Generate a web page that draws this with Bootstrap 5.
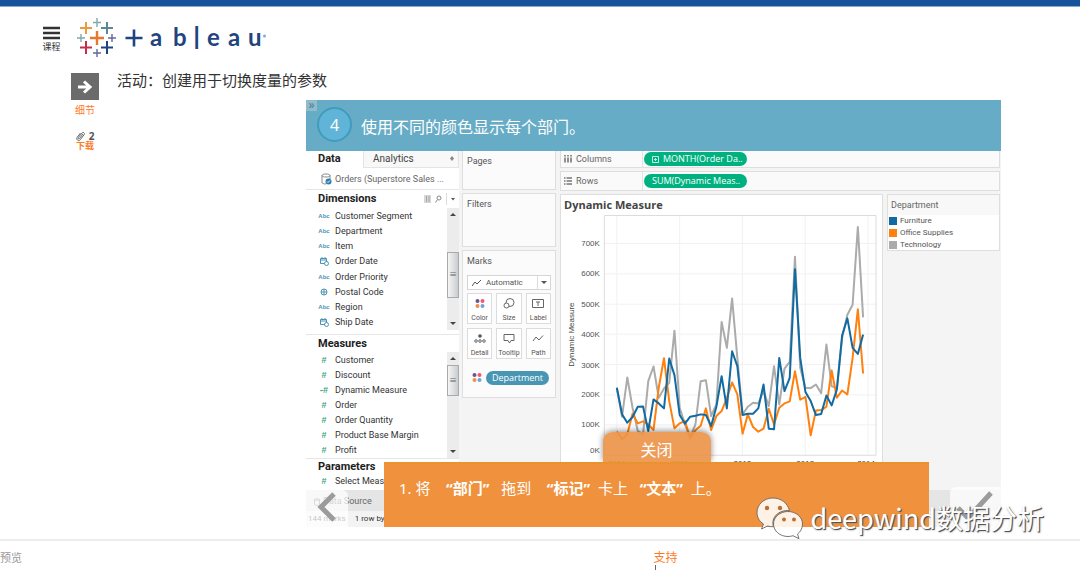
<!DOCTYPE html>
<html lang="zh-CN">
<head>
<meta charset="utf-8">
<meta name="viewport" content="width=device-width, initial-scale=1">
<title>创建用于切换度量的参数</title>
<link href="https://cdn.jsdelivr.net/npm/bootstrap@5.3.0/dist/css/bootstrap.min.css" rel="stylesheet">
<style>
  :root { --cjk: "Noto Sans", "Noto Sans CJK SC", sans-serif; --ui: Roboto, "Noto Sans CJK SC", sans-serif; }
  body { font-family: var(--cjk); color: #333; background: #fff; position: relative; overflow-x: hidden; }
  svg { display: block; }
  button { border: 0; background: none; padding: 0; font: inherit; color: inherit; }
  .topbar { height: 7px; background: #17539a; border-bottom: 1px solid #8aa9cd; }
  .site-head { padding: 11px 0 0 42px; gap: 16px; }
  .menu-btn { font-size: 9px; line-height: 12px; width: 19px; margin-top: 8px; color: #333; }
  .lesson { padding: 15px 79px 0 71px; gap: 18px; }
  .side { width: 28px; color: #ff7a1f; font-size: 10px; line-height: 12px; }
  .side a { color: #ff7a1f; text-decoration: none; }
  .go-box { width: 28px; height: 27px; background: #6b6b6b; }
  .files { font-size: 10px; color: #555; height: 10px; margin-top: 15px; }
  .files-link { font-size: 9px; line-height: 9px; font-weight: 700; }
  .lesson-title { font-size: 15px; line-height: 14px; font-weight: 400; margin: 0 0 13px; font-family: "Noto Sans CJK SC", sans-serif; }
  .stage { margin-left: 189px; }
  .banner { height: 51px; background: #67acc6; color: #fff; font-size: 16px; padding: 0 0 2px 11px; gap: 9px; }
  .step-no { width: 35px; height: 35px; border: 2px solid #419bbd; background: #5fb4d7; border-radius: 50%; }
  .corner { left: 0; top: 0; width: 11px; height: 11px; background: #8fbccb; color: #55798a; font-size: 12px; line-height: 9px; text-align: center; }
  .app { font-family: var(--ui); font-size: 9px; line-height: 12px; color: #444; background: #f4f4f4; height: 339px; }
  .pane { width: 153px; background: #fff; }
  .tab-row { height: 17px; font-size: 10px; line-height: 15px; }
  .tab-data { width: 57px; padding-left: 12px; color: #222; font-size: 11px; font-weight: 700; }
  .tab-an { background: #f8f8f8; border: 1px solid #e4e4e4; border-top: 0; padding: 0 4px 0 9px; }
  .source { height: 22px; border-bottom: 1px solid #e6e6e6; padding-left: 15px; gap: 3px; color: #666; }
  .pane h2 { font-size: 11px; font-weight: 700; color: #1d1d1d; margin: 0; padding: 0 3px 0 12px; line-height: 18px; height: 18px; }
  .pane h2.short { height: 17px; line-height: 15px; }
  .fields { height: 122px; margin: 0; color: #333; }
  .fields-m { height: 106px; }
  .fields li { padding-left: 12px; gap: 5px; min-height: 0; }
  .kind { width: 12px; flex: none; color: #4b93b3; font: 700 6px/8px "Liberation Sans", sans-serif; text-align: center; }
  .kind svg { margin: auto; }
  .hash { color: #3fa583; font-size: 9px; }
  .scroller { width: 12px; background: #ececec; padding: 4px 0; }
  .thumb { background: linear-gradient(90deg, #f5f5f5, #c9ccd0); border: 1px solid #aaa; height: 46px; color: #666; font-size: 8px; }
  .thumb-low { margin-top: 36px; }
  .thumb-m { height: 31px; margin-top: 5px; }
  .rule-top { border-top: 1px solid #e6e6e6; }
  .shelves { width: 94px; margin: 0 4px 0 3px; gap: 3px; }
  .shelf { background: #fbfbfb; border: 1px solid #dedede; padding: 4px; color: #555; }
  .shelf-pages { height: 39px; }
  .shelf-filters { height: 54px; }
  .shelf-marks { height: 148px; }
  .mark-type { height: 15px; border: 1px solid #d5d5d5; background: #fff; font-size: 8px; line-height: 12px; color: #555; padding: 0; margin: 8px 0 3px; }
  .mark-grid { display: grid; grid-template-columns: repeat(3, 1fr); gap: 4px; }
  .mark-btn { height: 31px; border: 1px solid #dcdcdc; background: #fff; font-size: 7px; line-height: 10px; padding-top: 4px; }
  .pill { border-radius: 8px; color: #fff; font: 9px/14px "Open Sans", sans-serif; height: 14px; white-space: nowrap; overflow: hidden; }
  .pill-dep { background: #4896b3; width: 63px; text-align: center; }
  .pill-green { background: #00b180; width: 103px; padding-left: 8px; }
  .board { gap: 3px; }
  .axis-shelf { background: #fafafa; border: 1px solid #dedede; height: 20px; margin-right: 1px; }
  .axis-shelf.first { height: 17px; border-top: 0; }
  .axis-label { width: 82px; padding-left: 3px; border-right: 1px solid #e4e4e4; gap: 4px; color: #666; margin-right: 1px; }
  .viz { background: #fff; border: 1px solid #dedede; }
  .viz h1 { font: 700 11px/14px "Open Sans", sans-serif; color: #444; margin: 3px 0 2px 3px; }
  .key { width: 113px; border: 1px solid #dedede; background: #fff; height: 57px; margin-right: 1px; }
  .key-head { background: #f8f8f8; height: 20px; line-height: 20px; padding-left: 3px; color: #666; }
  .key ul { font-size: 8px; line-height: 12px; color: #555; padding-left: 1px; }
  .key li { gap: 3px; }
  .swatch { width: 8px; height: 8px; }
  .source-bar { height: 21px; background: #e5e5e5; padding: 3px 0 0 8px; font-family: var(--ui); font-size: 9px; color: #666; gap: 3px; }
  .status-bar { height: 16px; background: #f3f3f3; font-family: var(--ui); font-size: 8px; color: #333; padding: 0 0 0 2px; gap: 9px; }
  .instruction { left: 78px; right: 72px; bottom: 0; }
  .close-tab { width: 108px; height: 30px; border-radius: 9px 9px 0 0; background: rgba(236,146,71,.9); color: #fff; font-size: 16px; line-height: 36px; box-shadow: 0 -1px 6px rgba(0,0,0,.45); }
  .instruction-text { height: 65px; background: #f0923d; border-top: 2px solid #ea922d; color: #fff; font: 15px/20px var(--cjk); padding: 14px 15px; position: relative; margin: 0; white-space: pre; }
  .nav-box { bottom: 0; background: rgba(255,255,255,.72); }
  .nav-prev { left: 0; width: 42px; height: 37px; border-radius: 0 6px 0 0; }
  .nav-next { right: 0; width: 51px; height: 40px; border-radius: 6px 0 0 0; }
  .site-foot { margin-top: 12px; border-top: 2px solid #ededed; height: 31px; padding-top: 8px; display: grid; grid-template-columns: 60.5% auto; font: 11px/16px "Noto Sans CJK SC", sans-serif; color: #999; overflow: hidden; }
  .site-foot a { color: #ff7a1f; text-decoration: none; font-size: 12px; }
  .caret-mark { width: 1px; height: 5px; background: #666; margin-left: 2px; }
  .watermark { right: 36px; bottom: 31px; gap: 7px; font: 27px/40px "Noto Sans CJK SC", sans-serif; color: #fff; text-shadow: 1px 1px 0 #555, 1px 1px 2px #777; pointer-events: none; }
</style>
</head>
<body>
<div class="topbar"></div>
<header class="site-head d-flex align-items-start">
  <button type="button" class="menu-btn">
    <svg width="17" height="15" viewBox="0 0 17 15" class="mx-auto"><path d="M0 2h17M0 7h17M0 12h17" stroke="#333" stroke-width="2.600"/></svg>
    <span class="d-block text-nowrap">课程</span>
  </button>
  <svg width="190" height="40" viewBox="77 18 190 40" role="img" aria-label="tableau">
    <g fill="none">
      <path d="M90 38h14M97 31v14" stroke="#e8762c" stroke-width="2.4"/>
      <path d="M80 28h12M86 22v12" stroke="#eb9a3c" stroke-width="2"/>
      <path d="M101 28h12M107 22v12" stroke="#5b879b" stroke-width="2"/>
      <path d="M80 47.500h12M86 41v13" stroke="#c72c4a" stroke-width="2"/>
      <path d="M101 47.500h12M107 41v13" stroke="#1f447e" stroke-width="2"/>
      <path d="M93 22.500h8M97 18v9M77 38h8M81 34v8" stroke="#7fa8b0" stroke-width="1.400"/>
      <path d="M108 38h8M112 34v8M93 53h8M97 49v8" stroke="#62699a" stroke-width="1.400"/>
      <path d="M125.500 38h17M134 29.500v17" stroke="#1f447e" stroke-width="2.600"/>
    </g>
    <g fill="#1f447e" font-family="Lato, sans-serif" font-size="24" font-weight="700">
      <text x="150 173" y="46">ab</text><text x="193" y="49" font-size="31" font-weight="400">l</text><text x="207 228 248" y="46">eau</text>
    </g>
    <circle cx="264.500" cy="36" r="1.500" fill="#8ba6c6"/>
  </svg>
</header>

<main class="lesson d-flex align-items-start">
  <nav class="side flex-shrink-0 text-center">
    <a href="#" class="d-block text-nowrap">
      <span class="go-box d-flex align-items-center justify-content-center mb-1"><svg width="16" height="16" viewBox="0 0 16 16"><path d="M1 8h12M7 2.500 13 8l-6 5.500" fill="none" stroke="#fff" stroke-width="3"/></svg></span>
      <span class="d-block">细节</span>
    </a>
    <div class="files d-flex align-items-center justify-content-center gap-1"><svg width="9" height="11" viewBox="0 0 9 11"><path d="M7 3 3.500 7.500c-.8 1-2-.1-1.200-1L6 2c1.300-1.500 3.300.1 2.100 1.700L4.300 8.700C2.600 10.800-.4 8.500 1.200 6.300L4.500 2" fill="none" stroke="#666"/></svg><b>2</b></div>
    <a href="#" class="files-link d-block text-nowrap">下载</a>
  </nav>
  <div class="flex-fill">
    <p class="lesson-title">活动：创建用于切换度量的参数</p>
    <section class="stage position-relative">
      <div class="banner d-flex align-items-center position-relative">
        <span class="corner position-absolute">»</span>
        <span class="step-no d-flex align-items-center justify-content-center">4</span>
        <span class="pt-1">使用不同的颜色显示每个部门。</span>
      </div>

      <div class="app d-flex">
        <div class="pane flex-shrink-0">
          <div class="tab-row d-flex"><span class="tab-data">Data</span><span class="tab-an flex-fill d-flex justify-content-between"><span>Analytics</span><svg width="4" height="12" viewBox="0 0 4 12"><path d="M2 5 4 7.500 2 10 0 7.500z" fill="#888"/></svg></span></div>
          <div class="source d-flex align-items-center"><svg width="11" height="12" viewBox="0 0 11 12"><path d="M1 2.500v7c0 1 2 1.500 4 1.500M9 2.500V6M1 2.500C1 .5 9 .5 9 2.500S1 4.500 1 2.500" fill="none" stroke="#888"/><circle cx="7.500" cy="8.500" r="3" fill="#287fae"/><path d="m6 8.500 1 1 2-2" fill="none" stroke="#fff"/></svg><span>Orders (Superstore Sales ...</span></div>
          <h2 class="d-flex align-items-center">Dimensions
            <svg class="ms-auto" width="32" height="12" viewBox="0 0 32 12"><path d="M0 3h7M0 5h7M0 7h7M0 9h7M2.500 3v6M5 3v6" stroke="#999" stroke-width=".8"/><circle cx="15" cy="5" r="2" fill="none" stroke="#888"/><path d="m13.500 6.500-2 3" stroke="#888"/><path d="M22.500 0v12" stroke="#ddd"/><path d="M27 5h4l-2 2.500z" fill="#555"/></svg>
          </h2>
          <div class="d-flex">
            <ul class="fields list-unstyled d-flex flex-column flex-fill">
              <li class="d-flex flex-fill align-items-center"><span class="kind">Abc</span>Customer Segment</li>
              <li class="d-flex flex-fill align-items-center"><span class="kind">Abc</span>Department</li>
              <li class="d-flex flex-fill align-items-center"><span class="kind">Abc</span>Item</li>
              <li class="d-flex flex-fill align-items-center"><span class="kind"><svg width="9" height="9" viewBox="0 0 9 9"><path d="M.5 1.500h6v5h-6zM.5 3h6M2 0v2M5 0v2" fill="none" stroke="#4b93b3"/><circle cx="6.500" cy="6.500" r="2" fill="#fff" stroke="#4b93b3"/></svg></span>Order Date</li>
              <li class="d-flex flex-fill align-items-center"><span class="kind">Abc</span>Order Priority</li>
              <li class="d-flex flex-fill align-items-center"><span class="kind"><svg width="8" height="8" viewBox="0 0 8 8"><circle cx="4" cy="4" r="3" fill="none" stroke="#4b93b3"/><path d="M4 1v6M1 4h6" stroke="#4b93b3"/></svg></span>Postal Code</li>
              <li class="d-flex flex-fill align-items-center"><span class="kind">Abc</span>Region</li>
              <li class="d-flex flex-fill align-items-center"><span class="kind"><svg width="9" height="9" viewBox="0 0 9 9"><path d="M.5 1.500h6v5h-6zM.5 3h6M2 0v2M5 0v2" fill="none" stroke="#4b93b3"/><circle cx="6.500" cy="6.500" r="2" fill="#fff" stroke="#4b93b3"/></svg></span>Ship Date</li>
            </ul>
            <div class="scroller d-flex flex-column">
              <svg class="mx-auto" width="6" height="4" viewBox="0 0 6 4"><path d="M0 4h6L3 1z" fill="#444"/></svg>
              <div class="thumb thumb-low d-flex align-items-center justify-content-center">≡</div>
              <svg class="mx-auto mt-auto" width="6" height="4" viewBox="0 0 6 4"><path d="M0 0h6L3 3z" fill="#444"/></svg>
            </div>
          </div>
          <h2 class="rule-top mt-1">Measures</h2>
          <div class="d-flex">
            <ul class="fields fields-m list-unstyled d-flex flex-column flex-fill">
              <li class="d-flex flex-fill align-items-center"><span class="kind hash">#</span>Customer</li>
              <li class="d-flex flex-fill align-items-center"><span class="kind hash">#</span>Discount</li>
              <li class="d-flex flex-fill align-items-center"><span class="kind hash text-nowrap">⁃#</span>Dynamic Measure</li>
              <li class="d-flex flex-fill align-items-center"><span class="kind hash">#</span>Order</li>
              <li class="d-flex flex-fill align-items-center"><span class="kind hash">#</span>Order Quantity</li>
              <li class="d-flex flex-fill align-items-center"><span class="kind hash">#</span>Product Base Margin</li>
              <li class="d-flex flex-fill align-items-center"><span class="kind hash">#</span>Profit</li>
            </ul>
            <div class="scroller d-flex flex-column">
              <svg class="mx-auto" width="6" height="4" viewBox="0 0 6 4"><path d="M0 4h6L3 1z" fill="#444"/></svg>
              <div class="thumb thumb-m d-flex align-items-center justify-content-center">≡</div>
              <svg class="mx-auto mt-auto" width="6" height="4" viewBox="0 0 6 4"><path d="M0 0h6L3 3z" fill="#444"/></svg>
            </div>
          </div>
          <h2 class="rule-top short">Parameters</h2>
          <ul class="list-unstyled fields h-auto"><li class="d-flex align-items-center"><span class="kind hash">#</span>Select Measure</li></ul>
        </div>

        <div class="shelves d-flex flex-column flex-shrink-0">
          <div class="shelf shelf-pages border-top-0">Pages</div>
          <div class="shelf shelf-filters">Filters</div>
          <div class="shelf shelf-marks">
            <span class="d-block">Marks</span>
            <button type="button" class="mark-type w-100 d-flex align-items-center">
              <svg class="ms-1 me-1" width="10" height="8" viewBox="0 0 10 8"><path d="m0 7 3-4 2 2 4-4" fill="none" stroke="#555"/></svg>Automatic
              <svg class="ms-auto" width="13" height="13" viewBox="0 0 13 13"><path d="M.5 0v13" stroke="#ddd"/><path d="M4 5h6L7 8z" fill="#555"/></svg>
            </button>
            <div class="mark-grid">
              <button type="button" class="mark-btn"><svg class="mx-auto mb-1" width="12" height="11" viewBox="0 0 12 11"><circle cx="3.500" cy="3" r="2" fill="#6b5686"/><circle cx="8.500" cy="3" r="2" fill="#f2596b"/><circle cx="3.500" cy="8" r="2" fill="#f28e4b"/><circle cx="8.500" cy="8" r="2" fill="#6ea5d8"/></svg>Color</button>
              <button type="button" class="mark-btn"><svg class="mx-auto mb-1" width="12" height="11" viewBox="0 0 12 11"><circle cx="7" cy="4.500" r="4" fill="none" stroke="#666"/><circle cx="3.500" cy="7.500" r="2.500" fill="#fff" stroke="#666"/></svg>Size</button>
              <button type="button" class="mark-btn"><svg class="mx-auto mb-1" width="12" height="11" viewBox="0 0 12 11"><path d="M.5 1.500h11v8H.5zM4 4h4M6 4v4" fill="none" stroke="#666"/></svg>Label</button>
              <button type="button" class="mark-btn"><svg class="mx-auto mb-1" width="12" height="11" viewBox="0 0 12 11"><circle cx="6" cy="3" r="1.800" fill="#555"/><g fill="none" stroke="#666"><circle cx="2" cy="8" r="1.300"/><circle cx="6" cy="8" r="1.300"/><circle cx="10" cy="8" r="1.300"/></g></svg>Detail</button>
              <button type="button" class="mark-btn"><svg class="mx-auto mb-1" width="12" height="11" viewBox="0 0 12 11"><path d="M1 1.500h10v6H8L6.500 10 5 7.500H1z" fill="none" stroke="#666"/></svg>Tooltip</button>
              <button type="button" class="mark-btn"><svg class="mx-auto mb-1" width="12" height="11" viewBox="0 0 12 11"><path d="m1 8 3-4 3 3 4-4.500" fill="none" stroke="#666"/></svg>Path</button>
            </div>
            <div class="d-flex align-items-center pt-2 mt-1">
              <svg class="ms-1" width="15" height="12" viewBox="0 0 15 12"><circle cx="3.500" cy="3" r="2" fill="#6b5686"/><circle cx="8.500" cy="3" r="2" fill="#f2596b"/><circle cx="3.500" cy="8" r="2" fill="#f28e4b"/><circle cx="8.500" cy="8" r="2" fill="#6ea5d8"/></svg>
              <span class="pill pill-dep flex-shrink-0">Department</span>
            </div>
          </div>
        </div>

        <div class="board flex-fill d-flex flex-column">
          <div class="axis-shelf first d-flex align-items-center"><span class="axis-label d-flex align-items-center h-100"><svg width="8" height="8" viewBox="0 0 8 8"><path d="M1 0v1.500M4 0v1.500M7 0v1.500M1 2.500v5M4 2.500v5M7 2.500v5" stroke="#777" stroke-width="1.600"/></svg>Columns</span><span class="pill pill-green"><svg class="d-inline-block me-1" width="7" height="7" viewBox="0 0 7 7"><path d="M.5.5h6v6h-6zM2 3.500h3M3.500 2v3" fill="none" stroke="#c7f0e3"/></svg>MONTH(Order Da..</span></div>
          <div class="axis-shelf d-flex align-items-center"><span class="axis-label d-flex align-items-center h-100"><svg width="8" height="8" viewBox="0 0 8 8"><path d="M0 1h1.500M2.500 1H8M0 4h1.500M2.500 4H8M0 7h1.500M2.500 7H8" stroke="#777" stroke-width="1.400"/></svg>Rows</span><span class="pill pill-green">SUM(Dynamic Meas..</span></div>
          <div class="d-flex flex-fill align-items-stretch gap-1">
            <div class="viz flex-fill">
              <h1>Dynamic Measure</h1>
              <svg width="100%" height="272" viewBox="561 214 322 272" preserveAspectRatio="xMinYMin meet">
                <path d="M604 243.500h273M604 274h273M604 304.500h273M604 334.500h273M604 365h273M604 395.500h273M604 425.500h273M617 215v241M680 215v241M743 215v241M806 215v241M869 215v241" stroke="#f1f1f1"/>
                <path d="M604.500 215.500h272.500v240.500h-272.500z" fill="none" stroke="#dcdcdc"/>
                <g font-family="Liberation Sans, sans-serif" font-size="8" fill="#555" text-anchor="end">
                  <text x="600" y="246">700K</text><text x="600" y="276">600K</text><text x="600" y="307">500K</text><text x="600" y="337">400K</text><text x="600" y="368">300K</text><text x="600" y="398">200K</text><text x="600" y="428">100K</text><text x="600" y="454">0K</text>
                </g>
                <g font-family="Liberation Sans, sans-serif" font-size="8" fill="#444" text-anchor="middle">
                  <text x="617" y="467">2010</text><text x="680" y="467">2011</text><text x="743" y="467">2012</text><text x="806" y="467">2013</text><text x="867" y="467">2014</text>
                  <text transform="translate(574 335) rotate(-90)">Dynamic Measure</text>
                </g>
                <!-- x is the month index, y is in thirds of a pixel -->
                <g transform="translate(617 205) scale(5.256 .33333)" fill="none" stroke-width="2" stroke-linejoin="round">
                  <polyline vector-effect="non-scaling-stroke" stroke="#ababab" points="0,550 1,637 2,519 3,610 4,680 5,690 6,530 7,486 8,580 9,552 10,535 11,378 12,610 13,660 14,700 15,660 16,530 17,527 18,635 19,600 20,352 21,430 22,281 23,460 24,630 25,607 26,595 27,597 28,560 29,605 30,485 31,600 32,492 33,472 34,156 35,490 36,551 37,551 38,540 39,566 40,420 41,545 42,552 43,400 44,330 45,300 46,66 47,338"/>
                  <polyline vector-effect="non-scaling-stroke" stroke="#ff800e" points="0,682 1,705 2,690 3,628 4,657 5,651 6,660 7,677 8,550 9,461 10,590 11,672 12,657 13,650 14,702 15,678 16,664 17,612 18,677 19,635 20,620 21,580 22,534 23,570 24,688 25,630 26,668 27,682 28,673 29,613 30,660 31,610 32,597 33,591 34,500 35,586 36,577 37,693 38,618 39,617 40,607 41,498 42,580 43,558 44,570 45,460 46,314 47,507"/>
                  <polyline vector-effect="non-scaling-stroke" stroke="#116ba2" points="0,550 1,630 2,655 3,638 4,607 5,606 6,680 7,585 8,597 9,612 10,462 11,512 12,632 13,658 14,637 15,634 16,630 17,632 18,665 19,607 20,515 21,612 22,440 23,485 24,632 25,628 26,628 27,612 28,540 29,673 30,675 31,460 32,560 33,520 34,193 35,460 36,563 37,590 38,632 39,629 40,573 41,603 42,555 43,392 44,341 45,430 46,448 47,390"/>
                </g>
              </svg>
            </div>
            <div class="key flex-shrink-0">
              <div class="key-head">Department</div>
              <ul class="list-unstyled m-0">
                <li class="d-flex align-items-center"><span class="swatch" style="background:#116ba2"></span>Furniture</li>
                <li class="d-flex align-items-center"><span class="swatch" style="background:#ff800e"></span>Office Supplies</li>
                <li class="d-flex align-items-center"><span class="swatch" style="background:#ababab"></span>Technology</li>
              </ul>
            </div>
          </div>
        </div>
      </div>
      <div class="source-bar d-flex align-items-center"><svg width="6" height="8" viewBox="0 0 6 8"><path d="M.5 1.500v5c0 1 5 1 5 0v-5c0-1-5-1-5 0s5 1 5 0" fill="none" stroke="#777"/></svg>Data Source</div>
      <div class="status-bar d-flex align-items-center"><span>144 marks</span><span>1 row by 1 column</span></div>

      <div class="instruction position-absolute d-flex flex-column">
        <button type="button" class="close-tab mx-auto">关闭</button>
        <p class="instruction-text">1. 将    <b>“部门”</b>   拖到    <b>“标记”</b>  卡上   <b>“文本”</b>  上。</p>
      </div>
      <button type="button" class="nav-box nav-prev position-absolute" aria-label="上一步"><svg width="42" height="37" viewBox="0 0 42 37"><path d="M28 4 15 17l13 13" fill="none" stroke="#9b9b9b" stroke-width="5"/></svg></button>
      <button type="button" class="nav-box nav-next position-absolute" aria-label="完成"><svg width="51" height="40" viewBox="0 0 51 40"><path d="m8 21 10 10L41 6" fill="none" stroke="#9b9b9b" stroke-width="5"/></svg></button>
    </section>
  </div>
</main>

<footer class="site-foot">
  <span>预览</span>
  <div><a href="#">支持</a><div class="caret-mark"></div></div>
</footer>

<div class="watermark position-absolute d-flex align-items-center">
  <svg width="47" height="42" viewBox="0 0 47 42">
    <g fill="#fff" fill-opacity=".88" stroke="#666" stroke-width=".9">
      <path d="M17 1C8 1 1 7.500 1 15.500c0 5 2.500 9 6.500 11.500L5.500 32l6-3c2 .6 4 .8 6 .7-3-9 5-17 16-16.200C31.500 6 25 1 17 1z"/>
      <path d="M32 14.500c-8 0-14.500 5.500-14.500 12.500S24 39.500 32 39.500c1.800 0 3.500-.3 5-.8l6 3-1.500-4.700c3-2.200 5-5.500 5-10 0-7-6.500-12.500-14.500-12.500z"/>
    </g>
    <g fill="#b8713a"><circle cx="11" cy="11" r="2.200"/><circle cx="24" cy="11" r="2.200"/><circle cx="28" cy="22.500" r="2"/><circle cx="38" cy="22.500" r="2"/></g>
  </svg>
  <span>deepwind数据分析</span>
</div>
<script src="https://cdn.jsdelivr.net/npm/bootstrap@5.3.0/dist/js/bootstrap.bundle.min.js"></script>
</body>
</html>
